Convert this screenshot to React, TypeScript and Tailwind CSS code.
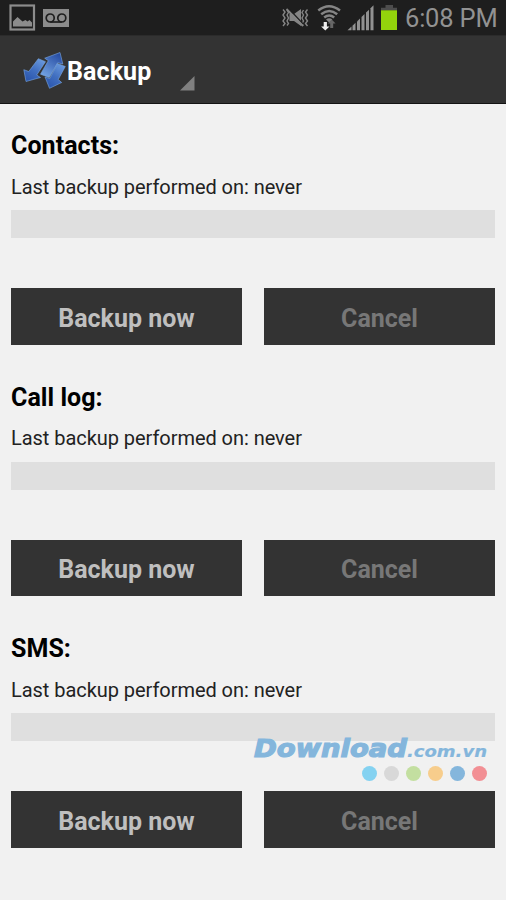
const sections = ["Contacts:", "Call log:", "SMS:"];

const dots = [
  "bg-[#84d2f1]",
  "bg-[#d8d8d8]",
  "bg-[#c3dfa0]",
  "bg-[#f7cd8c]",
  "bg-[#84b6dc]",
  "bg-[#f28f94]",
];

function StatusBar() {
  return (
    <div className="flex h-9 items-center justify-between border-b border-[#2b2b2b] bg-[#1e1e1e] pr-[9px] pl-[9px]">
      <div className="flex items-center gap-[7px]">
        {/* Gallery */}
        <svg width="27" height="27" viewBox="0 0 27 27">
          <rect x="1.5" y="1.5" width="23.5" height="24" fill="none" stroke="#8c8c8c" strokeWidth="2.2" />
          <path d="M4 22.5v-5l4.500-4.500 5 4.500 3-1.500 2 1.500 2-1.500 2.500 2.500v4z" fill="#8c8c8c" />
        </svg>
        {/* Voicemail */}
        <svg width="26" height="18" viewBox="0 0 26 18">
          <rect width="26" height="18" fill="#8c8c8c" />
          <g fill="none" stroke="#1e1e1e" strokeWidth="1.7">
            <circle cx="7.2" cy="9" r="4" />
            <circle cx="18.8" cy="9" r="4" />
            <path d="M7.2 13h11.6" />
          </g>
        </svg>
      </div>

      <div className="flex items-center">
        {/* Vibrate, muted */}
        <svg width="28" height="24" viewBox="282 6 28 24">
          <g fill="none" stroke="#858585" strokeWidth="1.4">
            <path d="M283 9.500l2 2.500-2 3 2 3-2 3 2 2.500-2 2.500M287 10l1.500 2.500-1.500 2.500 1.500 3-1.500 3 1.500 2.500-1.500 2" />
            <path d="M307.500 9.500l-2 2.500 2 3-2 3 2 3-2 2.500 2 2.500M303.500 10l-1.500 2.500 1.500 2.500-1.500 3 1.500 3-1.500 2.500 1.500 2" />
          </g>
          <path d="M289.500 14h4.500l7-5v17l-7-5h-4.500z" fill="#858585" />
          <path d="M288.500 8.500l15 16" stroke="#1e1e1e" strokeWidth="1.600" />
          <path d="M286.500 9l16.500 17" stroke="#858585" strokeWidth="1.800" />
        </svg>
        {/* Wi-Fi with traffic arrows */}
        <svg className="ml-[7px]" width="26" height="28" viewBox="317 4 26 28">
          <g fill="none" stroke="#858585" strokeWidth="2.500">
            <path d="M318.300 10.500q10.700-8.500 21.700 0" />
            <path d="M321.200 14.200q8-6.500 16 0" />
            <path d="M324.200 17.500q5-4 10 0" />
          </g>
          <path d="M326 19.500q3.200-2.500 6.400 0l-3.200 3z" fill="#858585" />
          <path d="M323.700 22h3.200v4.500h2.600l-4.200 4-4.200-4h2.600z" fill="#eeeeee" />
          <path d="M330.200 28v-4.500h-2.400l3.900-4 3.900 4h-2.400v4.500z" fill="#666666" />
        </svg>
        {/* Signal */}
        <svg className="ml-1" width="27" height="26" viewBox="347 5 27 26">
          <g fill="#929292">
            <path d="M347.500 30.300l4-3.700v3.700z" />
            <path d="M352.500 25.700l3-2.900v7.500h-3z" />
            <path d="M357 21.400l3-2.900v11.800h-3z" />
            <path d="M361.500 17l3-2.900v16.200h-3z" />
            <path d="M366 12.600l3-2.900v20.600h-3z" />
            <path d="M370.500 8.200l3-2.900v25h-3z" />
          </g>
        </svg>
        {/* Battery */}
        <svg className="ml-[7px]" width="16" height="25" viewBox="381 5 16 25">
          <path d="M385.500 5h7.500v2.800h4v2.700h-16v-2.700h4.500z" fill="#4d4d4d" />
          <path d="M381 10.300h16v19.700h-16z" fill="#93d40c" />
        </svg>
        <span className="ml-2 h-[30px] w-[92px] text-[25.500px] leading-[30px] tracking-[-0.2px] whitespace-nowrap text-[#929292]">
          6:08 PM
        </span>
      </div>
    </div>
  );
}

function SyncLogo() {
  return (
    <svg width="44" height="40" viewBox="22 50 44 40">
      <defs>
        <linearGradient id="arrow" x1="0.8" y1="0" x2="0.2" y2="1">
          <stop offset="0" stopColor="#6a9ade" />
          <stop offset="0.5" stopColor="#416fc0" />
          <stop offset="1" stopColor="#2a55ac" />
        </linearGradient>
        <linearGradient id="arrowUp" x1="0.8" y1="0" x2="0.2" y2="1">
          <stop offset="0" stopColor="#2449a0" />
          <stop offset="1" stopColor="#73a4e4" />
        </linearGradient>
      </defs>
      <g stroke="#79a7e3" strokeWidth="0.6" strokeLinejoin="round">
        <path d="M38.300 58.700L45.500 61.700L36.700 75L40.500 77.500L26 81.500L23.800 69.700L28.800 71.500z" fill="url(#arrow)" />
        <path d="M40.500 74.200L48.300 60.700L44.700 58.200L60 52.500L62.800 64L57.700 62.700L49.300 77.500z" fill="url(#arrowUp)" />
        <path d="M57.300 63.500L65.300 66.500L58.200 79.500L61.700 82.500L49.500 88.300L45 77L49.800 78.500z" fill="url(#arrow)" />
      </g>
    </svg>
  );
}

function ActionBar() {
  return (
    <header className="flex h-[68px] items-center border-b border-[#141414] bg-[#333333] pl-[22px]">
      <SyncLogo />
      <h1 className="mt-1 ml-px w-[112px] text-[25px] leading-[30px] font-bold tracking-[0.1px] text-white">Backup</h1>
      <svg className="mt-[26px]" width="16" height="16" viewBox="0 0 16 16">
        <path d="M15.500 1v14.500H1z" fill="#808080" />
      </svg>
    </header>
  );
}

function BackupSection({ title }: { title: string }) {
  return (
    <section className="flex h-[251.700px] flex-col items-start">
      <h2 className="text-[25px] leading-[30px] font-bold tracking-[0.05px] text-black">{title}</h2>
      <p className="mt-[10.500px] h-[30.500px] text-[20px] leading-[30px] tracking-[-0.05px] whitespace-nowrap text-[#222222]">
        Last backup performed on: never
      </p>
      <div className="mt-2 h-7 w-full bg-[#dfdfdf]" />
      <div className="mt-[50px] grid h-[56.500px] w-full grid-cols-2 gap-[22px] text-[25px] leading-[30px] font-bold">
        <button className="bg-[#333333] pt-[5px] text-[#bfbfbf]">Backup now</button>
        <button className="bg-[#333333] pt-[5px] text-[#777777]" disabled>
          Cancel
        </button>
      </div>
    </section>
  );
}

function Watermark() {
  return (
    <div className="absolute top-[734px] left-[253px] w-[236px]">
      <svg className="block" width="236" height="28" viewBox="0 0 236 28" fill="#84b6dc" fontFamily="'DejaVu Sans', sans-serif" fontWeight="bold" fontStyle="italic">
        <text x="1" y="22.500" fontSize="24.500" stroke="#84b6dc" strokeWidth="1.200" textLength="153" lengthAdjust="spacingAndGlyphs">Download</text>
        <text x="154" y="22.800" fontSize="16" stroke="#84b6dc" strokeWidth="0.200" textLength="80" lengthAdjust="spacingAndGlyphs">.com.vn</text>
      </svg>
      <div className="mt-1 flex justify-end gap-[7px] pr-[2px]">
        {dots.map((color) => (
          <span key={color} className={`size-[15px] rounded-full ${color}`} />
        ))}
      </div>
    </div>
  );
}

export default function App() {
  return (
    <div className="relative h-[900px] w-[506px] overflow-hidden bg-[#f1f1f1] font-[Roboto,sans-serif]">
      <StatusBar />
      <ActionBar />
      <main className="pt-[27px] pr-[11px] pl-[11px]">
        {sections.map((title) => (
          <BackupSection key={title} title={title} />
        ))}
      </main>
      <Watermark />
    </div>
  );
}
